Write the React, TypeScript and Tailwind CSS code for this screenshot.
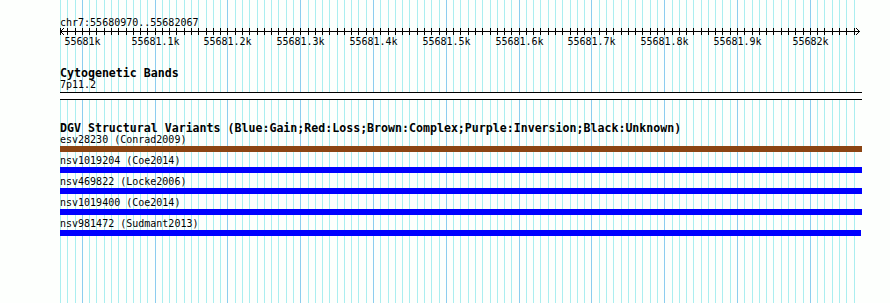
import React from 'react'

const START = 55680970
const PX_PER_BP = 0.728
const X0 = 60

const xOf = (bp: number) => X0 + (bp - START) * PX_PER_BP

interface Variant {
  name: string
  color: string
  width: string
}

const VARIANTS: Variant[] = [
  { name: 'esv28230 (Conrad2009)', color: 'bg-[#8b4513]', width: 'w-[802px]' },
  { name: 'nsv1019204 (Coe2014)', color: 'bg-[#0000ff]', width: 'w-[802px]' },
  { name: 'nsv469822 (Locke2006)', color: 'bg-[#0000ff]', width: 'w-[802px]' },
  { name: 'nsv1019400 (Coe2014)', color: 'bg-[#0000ff]', width: 'w-[802px]' },
  { name: 'nsv981472 (Sudmant2013)', color: 'bg-[#0000ff]', width: 'w-[801px]' },
]

const gridBps = Array.from({ length: 110 }, (_, i) => START + i * 10)

function GridLines() {
  return (
    <svg className="absolute inset-0" width={890} height={303}>
      {gridBps.map((bp) => {
        const x = Math.round(xOf(bp)) + 0.5
        const major = bp % 100 === 0
        return (
          <line
            key={bp}
            x1={x}
            x2={x}
            y1={0}
            y2={303}
            stroke={major ? '#8ccdef' : '#aaeef0'}
            strokeWidth={1}
          />
        )
      })}
    </svg>
  )
}

function Ruler() {
  const majors = gridBps.filter((bp) => bp % 100 === 0)
  const label = (bp: number) => {
    const k = bp / 1000
    return `${k % 1 === 0 ? k : k.toFixed(1)}k`
  }
  return (
    <svg width={890} height={22} className="block -mt-[3px]">
      <line x1={60} x2={860} y1={5.5} y2={5.5} stroke="#000" strokeWidth={1} />
      <polyline points="64,2 60.5,5.5 64,9" fill="none" stroke="#000" strokeWidth={1} />
      <polyline points="856,2 859.5,5.5 856,9" fill="none" stroke="#000" strokeWidth={1} />
      {gridBps.map((bp) => {
        const x = Math.round(xOf(bp)) + 0.5
        return <line key={bp} x1={x} x2={x} y1={2} y2={9} stroke="#000" strokeWidth={1} />
      })}
      {majors.map((bp) => (
        <text
          key={bp}
          x={Math.round(xOf(bp)) + 0.5}
          y={18.5}
          textAnchor="middle"
          fontSize={10}
          fontFamily='"DejaVu Sans Mono", monospace'
          fill="#000"
        >
          {label(bp)}
        </text>
      ))}
    </svg>
  )
}

export default function App() {
  return (
    <div className="relative w-[890px] h-[303px] overflow-hidden bg-[#fdfffd] text-black font-['DejaVu_Sans_Mono',monospace]">
      <GridLines />
      <div className="relative">
        {/* Ruler */}
        <div className="pt-[17px] pl-[60px] text-[10px] leading-[12px]">chr7:55680970..55682067</div>
        <Ruler />

        {/* Cytogenetic bands */}
        <div className="pl-[60px] mt-[19px]">
          <div className="text-[11.6px] leading-[12px] font-bold">Cytogenetic Bands</div>
          <div className="text-[10px] leading-[12px]">7p11.2</div>
          <div className="mt-[1px] w-[802px] h-[8px] bg-white border-t border-b border-black" />
        </div>

        {/* DGV */}
        <div className="pl-[60px] mt-[23px]">
          <div className="text-[11.6px] leading-[11px] font-bold whitespace-nowrap">
            DGV Structural Variants (Blue:Gain;Red:Loss;Brown:Complex;Purple:Inversion;Black:Unknown)
          </div>
          {VARIANTS.map((v) => (
            <div key={v.name} className="mb-[3px]">
              <div className="text-[10px] leading-[12px] whitespace-nowrap">{v.name}</div>
              <div className={`h-[6px] ${v.width} ${v.color}`} />
            </div>
          ))}
        </div>
      </div>
    </div>
  )
}
